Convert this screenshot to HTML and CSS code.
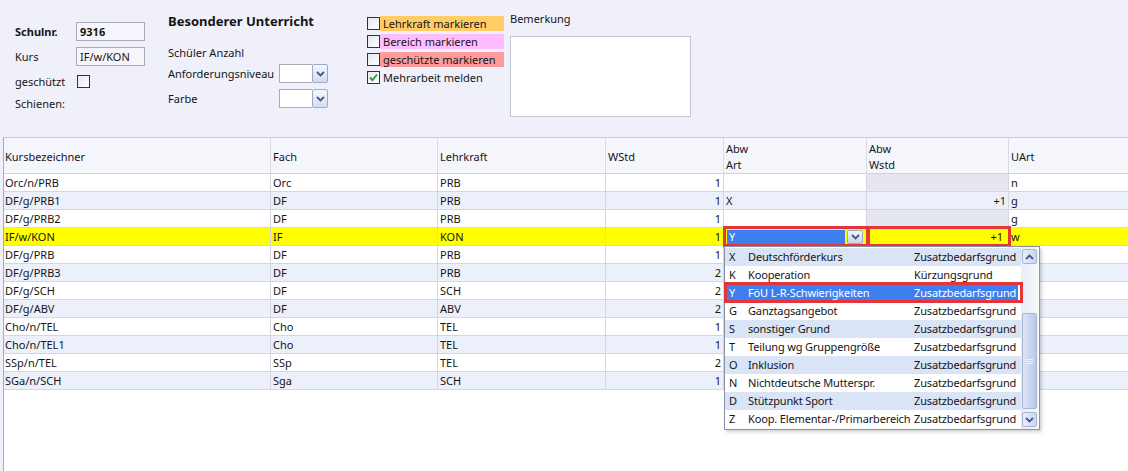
FILE: index.html
```html
<!DOCTYPE html>
<html lang="de">
<head>
<meta charset="utf-8">
<title>Besonderer Unterricht</title>
<link rel="stylesheet" href="styles.css">
</head>
<body>
<div class="app">
  <div class="top">
    <div class="col col1">
      <div class="frow r-schulnr"><span class="lbl b">Schulnr.</span><span class="inp b">9316</span></div>
      <div class="frow r-kurs"><span class="lbl">Kurs</span><span class="inp">IF/w/KON</span></div>
      <div class="frow r-gesch"><span class="lbl">geschützt</span><span class="cb"></span></div>
      <div class="frow r-schien"><span class="lbl">Schienen:</span></div>
    </div>
    <div class="col col2">
      <div class="title">Besonderer Unterricht</div>
      <div class="frow r-anz">Schüler Anzahl</div>
      <div class="frow r-anf"><span class="lbl2">Anforderungsniveau</span><span class="combo"><span class="cfield"></span><span class="cbtn"><svg viewBox="0 0 9 6" width="9" height="6"><path d="M1 1 L4.5 4.5 L8 1" /></svg></span></span></div>
      <div class="frow r-farbe"><span class="lbl2">Farbe</span><span class="combo"><span class="cfield"></span><span class="cbtn"><svg viewBox="0 0 9 6" width="9" height="6"><path d="M1 1 L4.5 4.5 L8 1" /></svg></span></span></div>
    </div>
    <div class="col col3">
      <div class="chk"><span class="cb"></span><span class="ctext c-orange">Lehrkraft markieren</span></div>
      <div class="chk"><span class="cb"></span><span class="ctext c-pink">Bereich markieren</span></div>
      <div class="chk"><span class="cb"></span><span class="ctext c-red">geschützte markieren</span></div>
      <div class="chk"><span class="cb"><svg viewBox="0 0 11 11" width="11" height="11"><path d="M2 5.5 L4.5 8 L9 2.5" /></svg></span><span class="ctext">Mehrarbeit melden</span></div>
    </div>
    <div class="col col4">
      <div class="bem">Bemerkung</div>
      <div class="textarea"></div>
    </div>
  </div>

  <div class="grid">
    <div class="row head">
      <div class="c">Kursbezeichner</div>
      <div class="c">Fach</div>
      <div class="c">Lehrkraft</div>
      <div class="c">WStd</div>
      <div class="c">Abw<br>Art</div>
      <div class="c">Abw<br>Wstd</div>
      <div class="c">UArt</div>
    </div>
    <div class="row">
      <div class="c">Orc/n/PRB</div><div class="c">Orc</div><div class="c">PRB</div><div class="c num">1</div><div class="c"></div><div class="c dis"></div><div class="c">n</div>
    </div>
    <div class="row alt">
      <div class="c">DF/g/PRB1</div><div class="c">DF</div><div class="c">PRB</div><div class="c num">1</div><div class="c">X</div><div class="c num">+1</div><div class="c">g</div>
    </div>
    <div class="row">
      <div class="c">DF/g/PRB2</div><div class="c">DF</div><div class="c">PRB</div><div class="c num">1</div><div class="c"></div><div class="c dis"></div><div class="c">g</div>
    </div>
    <div class="row sel">
      <div class="c">IF/w/KON</div><div class="c">IF</div><div class="c">KON</div><div class="c num">1</div>
      <div class="c edit"><span class="efield">Y</span><span class="ebtn"><svg viewBox="0 0 9 6" width="9" height="6"><path d="M1 1 L4.5 4.5 L8 1" /></svg></span></div>
      <div class="c num edit2">+1</div>
      <div class="c">w</div>
    </div>
    <div class="row">
      <div class="c">DF/g/PRB</div><div class="c">DF</div><div class="c">PRB</div><div class="c num">1</div><div class="c"></div><div class="c"></div><div class="c"></div>
    </div>
    <div class="row alt">
      <div class="c">DF/g/PRB3</div><div class="c">DF</div><div class="c">PRB</div><div class="c num">2</div><div class="c"></div><div class="c"></div><div class="c"></div>
    </div>
    <div class="row">
      <div class="c">DF/g/SCH</div><div class="c">DF</div><div class="c">SCH</div><div class="c num">2</div><div class="c"></div><div class="c"></div><div class="c"></div>
    </div>
    <div class="row alt">
      <div class="c">DF/g/ABV</div><div class="c">DF</div><div class="c">ABV</div><div class="c num">2</div><div class="c"></div><div class="c"></div><div class="c"></div>
    </div>
    <div class="row">
      <div class="c">Cho/n/TEL</div><div class="c">Cho</div><div class="c">TEL</div><div class="c num">1</div><div class="c"></div><div class="c"></div><div class="c"></div>
    </div>
    <div class="row alt">
      <div class="c">Cho/n/TEL1</div><div class="c">Cho</div><div class="c">TEL</div><div class="c num">1</div><div class="c"></div><div class="c"></div><div class="c"></div>
    </div>
    <div class="row">
      <div class="c">SSp/n/TEL</div><div class="c">SSp</div><div class="c">TEL</div><div class="c num">2</div><div class="c"></div><div class="c"></div><div class="c"></div>
    </div>
    <div class="row alt">
      <div class="c">SGa/n/SCH</div><div class="c">Sga</div><div class="c">SCH</div><div class="c num">1</div><div class="c"></div><div class="c"></div><div class="c"></div>
    </div>

    <div class="popup">
      <div class="items">
        <div class="it alt"><span>X</span><span>Deutschförderkurs</span><span>Zusatzbedarfsgrund</span></div>
        <div class="it"><span>K</span><span>Kooperation</span><span>Kürzungsgrund</span></div>
        <div class="it cur"><span>Y</span><span>FöU L-R-Schwierigkeiten</span><span>Zusatzbedarfsgrund</span></div>
        <div class="it"><span>G</span><span>Ganztagsangebot</span><span>Zusatzbedarfsgrund</span></div>
        <div class="it alt"><span>S</span><span>sonstiger Grund</span><span>Zusatzbedarfsgrund</span></div>
        <div class="it"><span>T</span><span>Teilung wg Gruppengröße</span><span>Zusatzbedarfsgrund</span></div>
        <div class="it alt"><span>O</span><span>Inklusion</span><span>Zusatzbedarfsgrund</span></div>
        <div class="it"><span>N</span><span>Nichtdeutsche Mutterspr.</span><span>Zusatzbedarfsgrund</span></div>
        <div class="it alt"><span>D</span><span>Stützpunkt Sport</span><span>Zusatzbedarfsgrund</span></div>
        <div class="it"><span>Z</span><span>Koop. Elementar-/Primarbereich</span><span>Zusatzbedarfsgrund</span></div>
      </div>
      <div class="sbar">
        <div class="sbtn"><svg viewBox="0 0 9 6" width="9" height="6"><path d="M1 5 L4.5 1.5 L8 5" /></svg></div>
        <div class="thumb"><span class="grip"></span></div>
        <div class="sbtn down"><svg viewBox="0 0 9 6" width="9" height="6"><path d="M1 1 L4.5 4.5 L8 1" /></svg></div>
      </div>
    </div>
  </div>
</div>
</body>
</html>
```

FILE: styles.css
```css
* { box-sizing: border-box; }
html, body { margin: 0; padding: 0; }
body {
  font-family: "Noto Sans", "Open Sans", sans-serif;
  font-size: 11px;
  color: #151515;
  background: #F0F0FA;
}
.app {
  width: 1128px;
  height: 471px;
  overflow: hidden;
  background: #F0F0FA;
}
.b { font-weight: bold; }

/* ---------- top form ---------- */
.top {
  display: flex;
  height: 137px;
}
.col { display: flex; flex-direction: column; }
.frow { display: flex; align-items: center; white-space: nowrap; }

.col1 { width: 168px; padding-left: 15px; padding-top: 22px; }
.col1 .lbl { width: 61px; }
.r-schulnr, .r-kurs { height: 19px; }
.r-kurs { margin-top: 6px; }
.r-gesch { height: 18px; margin-top: 6px; }
.r-gesch .lbl { width: 62px; }
.r-schien { height: 18px; margin-top: 4px; }
.inp {
  width: 69px;
  height: 19px;
  line-height: 17px;
  padding-left: 3px;
  border: 1px solid #A9ABB6;
  background: #F5F5FB;
}

.col2 { width: 199px; padding-top: 11px; }
.title { font-weight: bold; font-size: 13px; line-height: 20px; white-space: nowrap; }
.r-anz { height: 18px; margin-top: 12px; }
.r-anf { height: 19px; margin-top: 3px; }
.r-farbe { height: 19px; margin-top: 6px; }
.lbl2 { width: 111px; }
.combo { display: flex; height: 19px; width: 49px; }
.cfield { flex: 1; background: #fff; border: 1px solid #A9ABB6; border-right: none; }
.cbtn {
  width: 16px;
  display: flex;
  align-items: center;
  justify-content: center;
  border: 1px solid #9EAAC6;
  border-radius: 2px;
  background: linear-gradient(#F4F7FD, #D3DDF1);
}
svg path { fill: none; stroke: #3F5B95; stroke-width: 1.8; }

.col3 { width: 143px; padding-top: 16px; gap: 3px; }
.chk { display: flex; align-items: center; height: 15px; white-space: nowrap; }
.cb {
  width: 13px;
  height: 13px;
  border: 1px solid #2C3440;
  background: linear-gradient(135deg, #E6E8EE, #FFFFFF);
  display: flex;
  align-items: center;
  justify-content: center;
  flex: none;
}
.cb svg path { stroke: #2E9A3C; stroke-width: 1.9; }
.ctext { height: 15px; line-height: 15px; padding-left: 3px; width: 124px; }
.c-orange { background: #FFCC66; }
.c-pink { background: #FFBDFF; }
.c-red { background: #FF9B9B; }

.col4 { padding-top: 11px; }
.bem { line-height: 16px; }
.textarea {
  margin-top: 9px;
  width: 181px;
  height: 81px;
  background: #fff;
  border: 1px solid #C4C6D2;
}

/* ---------- grid ---------- */
.grid {
  position: relative;
  height: 334px;
  margin-left: 3px;
  border-left: 1px solid #A9A9BA;
  border-top: 1px solid #CACAD6;
  background: #fff;
}
.row {
  display: grid;
  grid-template-columns: 266px 167px 168px 118px 143px 142px 1fr;
  height: 18px;
  border-bottom: 1px solid #D6D6DE;
  background: #fff;
}
.row.alt { background: #EBF0FB; }
.row.sel { background: #FFFF00; }
.c {
  padding: 0 2px;
  line-height: 17px;
  white-space: nowrap;
  overflow: hidden;
  border-left: 1px solid #D6D6DE;
}
.c:first-child { border-left: none; padding-left: 1px; }
.num { text-align: right; }
.dis { background: #E6E6EE; }

.row.head {
  height: 36px;
  background: #F5F5FC;
  border-bottom: 1px solid #D2D2DC;
}
.head .c {
  display: flex;
  align-items: center;
  padding-top: 2px;
  line-height: 16px;
  border-left-color: #DADAE4;
}

.edit, .edit2 { position: relative; overflow: visible; }
.edit::after, .edit2::after {
  content: "";
  position: absolute;
  top: -2px;
  bottom: -2px;
  left: -1px;
  right: -3px;
  border: 3px solid #E5353B;
  z-index: 2;
}
.edit2::after { left: 0; }
.edit { display: flex; padding: 2px 3px 1px 3px; }
.efield {
  flex: 1;
  background: #3D7FEF;
  color: #fff;
  line-height: 14px;
  padding-left: 2px;
}
.ebtn {
  width: 16px;
  margin-left: 2px;
  display: flex;
  align-items: center;
  justify-content: center;
  border: 1px solid #9EAAC6;
  border-radius: 2px;
  background: linear-gradient(#F1F3F8, #CFD4E0);
}
.edit2 { padding-right: 5px; }

/* ---------- popup list ---------- */
.popup {
  position: absolute;
  left: 720px;
  top: 108px;
  width: 316px;
  height: 184px;
  border: 1px solid #8D8FA0;
  background: #fff;
  display: flex;
  box-shadow: 2px 2px 3px rgba(0, 0, 0, 0.18);
  z-index: 3;
}
.items { width: 296px; padding-top: 1px; }
.it {
  display: grid;
  grid-template-columns: 19px 166px 1fr;
  height: 18px;
  line-height: 18px;
  padding-left: 4px;
  white-space: nowrap;
  letter-spacing: -0.15px;
}
.it span { overflow: hidden; }
.it.alt { background: #DAE4F7; }
.it.cur {
  position: relative;
  background: #3D7FEF;
  color: #fff;
  box-shadow: inset -3px 0 0 #fff;
}
.it.cur::after {
  content: "";
  position: absolute;
  top: -2px;
  bottom: -1px;
  left: -1px;
  right: -2px;
  border: 3px solid #E5353B;
}
.sbar {
  width: 17px;
  background: linear-gradient(90deg, #E9ECF5, #F6F7FB);
  display: flex;
  flex-direction: column;
  align-items: center;
}
.sbtn, .thumb {
  width: 15px;
  border: 1px solid #A7B4D2;
  border-radius: 2px;
  background: linear-gradient(90deg, #E8EEFB, #C9D6F1);
}
.sbtn {
  height: 15px;
  margin-top: 2px;
  display: flex;
  align-items: center;
  justify-content: center;
}
.sbtn.down { margin-top: auto; margin-bottom: 2px; }
.thumb {
  height: 96px;
  margin-top: 49px;
  display: flex;
  align-items: center;
  justify-content: center;
  background: linear-gradient(90deg, #DCE5F8, #B9C9EC);
}
.grip {
  width: 7px;
  height: 5px;
  border-top: 1px solid #EEF2FB;
  border-bottom: 1px solid #EEF2FB;
  background: linear-gradient(#EEF2FB, #EEF2FB) center / 7px 1px no-repeat;
}
```
